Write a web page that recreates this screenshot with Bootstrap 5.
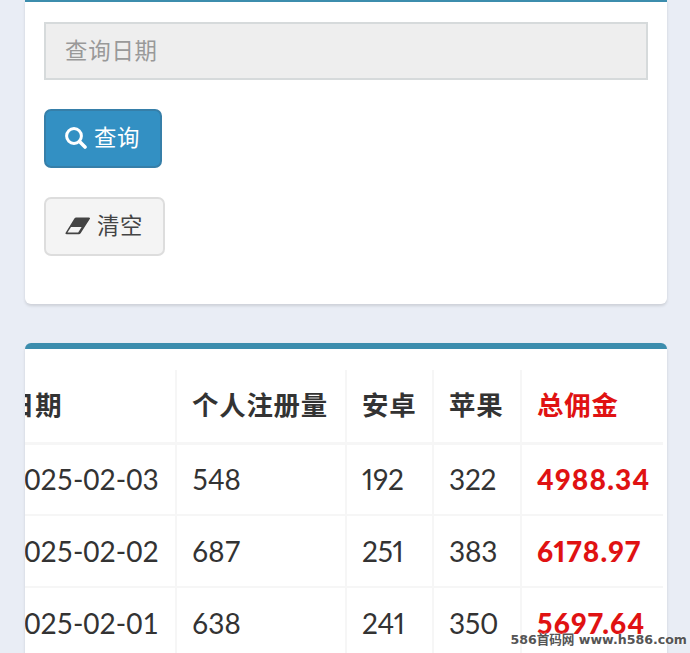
<!DOCTYPE html>
<html lang="zh-CN">
<head>
  <meta charset="UTF-8" />
  <meta name="viewport" content="width=device-width, initial-scale=1" />
  <title>数据查询</title>
  <link href="https://cdn.jsdelivr.net/npm/bootstrap@5.3.0/dist/css/bootstrap.min.css" rel="stylesheet" />
  <style>
    body {
      background: #e9edf5;
      color: #333;
      font-family: Lato, "Noto Sans CJK SC", sans-serif;
      height: 653px;
      overflow: hidden;
    }
    .page-wrap { padding: 0 23px 0 25px; }
    .panel-box {
      background: #fff;
      border-radius: 6px;
      box-shadow: 0 2px 3px rgba(0, 0, 0, .12);
      overflow: hidden;
    }
    .search-box {
      border-top: 2px solid #3c8dad;
      border-top-left-radius: 0;
      border-top-right-radius: 0;
      height: 304px;
      padding: 20px 19px;
    }
    .result-box {
      border-top: 6px solid #3c8dad;
      height: 330px;
      margin-top: 39px;
      padding: 21px 4px 0 0;
    }
    .date-input, .date-input:disabled {
      background: #eee;
      border: 2px solid #d6dadb;
      border-radius: 0;
      font-size: 22.4px;
      height: 58px;
      letter-spacing: .8px;
      padding: 0 19px 1px;
    }
    .date-input::placeholder { color: #999; }
    .btn-stack { gap: 29px; margin-top: 29px; }
    .tool-btn {
      border-width: 2px;
      border-radius: 7px;
      font-size: 22.4px;
      gap: 7px;
      height: 59px;
      letter-spacing: .6px;
      padding: 0 19px 1px;
    }
    .query-btn { --bs-btn-bg: #3390c3; --bs-btn-border-color: #367fa9; width: 118px; }
    .clear-btn { --bs-btn-bg: #f4f4f4; --bs-btn-border-color: #ddd; --bs-btn-color: #444; gap: 6px; width: 121px; }
    .clear-btn { padding-bottom: 2px; }
    .data-table {
      --bs-table-bg: transparent;
      --bs-table-color: #333;
      font-size: 28px;
      margin-left: -34px;
      table-layout: fixed;
      width: 672px;
    }
    .data-table th, .data-table td {
      border: 0 solid #f6f6f6;
      border-right-width: 2px;
      height: 72px;
      line-height: 40px;
      padding: 0 0 0 15px;
      vertical-align: middle;
      white-space: nowrap;
    }
    .data-table td { border-bottom-width: 2px; }
    .data-table th {
      border-bottom-width: 3px;
      font-size: 26.4px;
      height: 73px;
      letter-spacing: .8px;
      padding-bottom: 1px;
    }
    .data-table th:first-child, .data-table td:first-child { padding-left: 17px; }
    .data-table th:last-child, .data-table td:last-child { border-right: 0; }
    .data-table td.device-num { font-variant-numeric: proportional-nums; letter-spacing: -.2px; }
    .data-table .money { color: #e01212; font-weight: 900; }
    .data-table th.money { font-weight: 700; }
    .data-table td.money { font-variant-numeric: proportional-nums; letter-spacing: 1.2px; }
    .site-mark {
      bottom: 3px;
      color: #555;
      font: bold 12.6px/20px "DejaVu Sans", "Noto Sans CJK SC", sans-serif;
      right: 3px;
      text-shadow: 0 0 1px #fff, 0 0 2px #fff;
      white-space: nowrap;
    }
  </style>
</head>
<body class="position-relative">
<div class="page-wrap">
  <div class="panel-box search-box">
    <input type="text" class="form-control date-input" placeholder="查询日期" disabled />
    <div class="btn-stack d-flex flex-column align-items-start">
      <button type="button" class="btn btn-primary tool-btn query-btn d-flex align-items-center">
        <svg width="22" height="22" viewBox="0 0 22 22" fill="none" stroke="currentColor" stroke-linecap="round">
          <circle cx="9" cy="9" r="7.4" stroke-width="3" />
          <path d="M14.5 14.5L20 20" stroke-width="3.6" />
        </svg>
        <span>查询</span>
      </button>
      <button type="button" class="btn btn-light tool-btn clear-btn d-flex align-items-center">
        <svg width="26" height="18" viewBox="0 0 26 18">
          <path d="M11.2 .5H23.6Q25.8 .5 24.6 2.3L15.8 16.1Q15 17.3 13.8 17.3H1.8Q-.3 17.3 .8 15.5L9.4 1.5Q10 .5 11.2 .5Z" fill="currentColor" />
          <path d="M6 10H16.6L13.2 15.5H2.5Z" fill="#f4f4f4" />
        </svg>
        <span>清空</span>
      </button>
    </div>
  </div>

  <div class="panel-box result-box">
    <table class="table data-table mb-0">
      <colgroup>
        <col style="width: 185px" />
        <col style="width: 170px" />
        <col style="width: 87px" />
        <col style="width: 88px" />
        <col />
      </colgroup>
      <thead>
        <tr>
          <th>日期</th>
          <th>个人注册量</th>
          <th>安卓</th>
          <th>苹果</th>
          <th class="money">总佣金</th>
        </tr>
      </thead>
      <tbody id="report-body"></tbody>
    </table>
  </div>
</div>
<div class="site-mark position-absolute">586首码网 www.h586.com</div>

<script src="https://cdn.jsdelivr.net/npm/bootstrap@5.3.0/dist/js/bootstrap.bundle.min.js"></script>
<script>
  const reports = [
    { date: "2025-02-03", total: 548, android: 192, apple: 322, money: "4988.34" },
    { date: "2025-02-02", total: 687, android: 251, apple: 383, money: "6178.97" },
    { date: "2025-02-01", total: 638, android: 241, apple: 350, money: "5697.64" }
  ];

  document.getElementById("report-body").innerHTML = reports.map(row => `
    <tr>
      <td>${row.date}</td>
      <td>${row.total}</td>
      <td class="device-num">${row.android}</td>
      <td class="device-num">${row.apple}</td>
      <td class="money">${row.money}</td>
    </tr>
  `).join("");
</script>
</body>
</html>
